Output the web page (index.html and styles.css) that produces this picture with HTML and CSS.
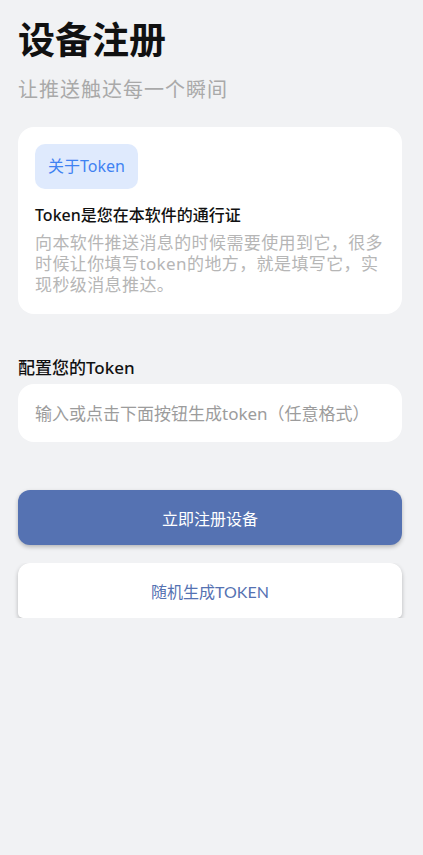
FILE: index.html
```html
<!DOCTYPE html>
<html lang="zh-CN">
<head>
  <meta charset="UTF-8" />
  <meta name="viewport" content="width=device-width, initial-scale=1.0"/>
  <title>设备注册</title>
  <link rel="stylesheet" href="styles.css">
</head>
<body>
  <div class="page">
    <h1 class="title">设备注册</h1>
    <p class="subtitle">让推送触达每一个瞬间</p>

    <div class="card">
      <span class="chip">关于Token</span>
      <h2 class="card-title">Token是您在本软件的通行证</h2>
      <p class="card-desc">向本软件推送消息的时候需要使用到它，很多时候让你填写token的地方，就是填写它，实现秒级消息推达。</p>
    </div>

    <label class="field-label" for="token">配置您的Token</label>
    <input type="text" id="token" class="field" placeholder="输入或点击下面按钮生成token（任意格式）" />

    <div class="actions">
      <button class="btn primary">立即注册设备</button>
      <div class="clip">
        <button class="btn secondary">随机生成TOKEN</button>
      </div>
    </div>
  </div>
</body>
</html>
```

FILE: styles.css
```css
body {
  margin: 0;
  background: #f1f2f4;
  font-family: "Noto Sans", "Noto Sans CJK SC", sans-serif;
  color: #111;
}

.page {
  padding: 18px 21px 0 18px;
}

.title {
  margin: 0;
  font-size: 37px;
  line-height: 44px;
  font-weight: 700;
  color: #111;
}

.subtitle {
  margin: 13px 0 0;
  font-size: 20px;
  line-height: 30px;
  color: #a9a9a9;
  letter-spacing: 1px;
}

.card {
  margin-top: 22px;
  background: #ffffff;
  border-radius: 16px;
  padding: 17px 17px 19px;
}

.chip {
  display: inline-block;
  background: #dfeafd;
  color: #3f82f2;
  font-size: 16px;
  line-height: 45px;
  padding: 0 13px;
  border-radius: 10px;
}

.card-title {
  margin: 15px 0 0;
  font-size: 16px;
  line-height: 22px;
  font-weight: 500;
  color: #111;
}

.card-desc {
  margin: 6px 0 0;
  font-size: 17px;
  line-height: 21px;
  letter-spacing: 0.4px;
  color: #b6b6b6;
}

.field-label {
  display: block;
  margin-top: 43px;
  font-size: 17px;
  line-height: 22px;
  font-weight: 500;
  color: #111;
}

.field {
  display: block;
  box-sizing: border-box;
  width: 100%;
  height: 58px;
  margin-top: 5px;
  padding: 0 17px;
  border: none;
  border-radius: 16px;
  background: #ffffff;
  font-family: "Noto Sans", "Noto Sans CJK SC", sans-serif;
  font-size: 17px;
  color: #333;
  outline: none;
}

.field::placeholder {
  color: #9c9c9c;
}

.actions {
  margin-top: 48px;
}

.btn {
  display: block;
  width: 100%;
  height: 55px;
  border: none;
  border-radius: 12px;
  font-family: "Lato", "Noto Sans CJK SC", sans-serif;
  font-size: 16px;
  cursor: pointer;
}

.primary {
  background: #5572b2;
  color: #ffffff;
  box-shadow: 0 2px 4px rgba(0, 0, 0, 0.25);
}

.clip {
  margin: 18px -6px 0;
  padding: 0 6px;
  overflow: hidden;
}

.secondary {
  background: #ffffff;
  color: #5572b2;
  border-radius: 12px 12px 5px 5px;
  box-shadow: 0 2px 4px rgba(0, 0, 0, 0.25);
}
```
